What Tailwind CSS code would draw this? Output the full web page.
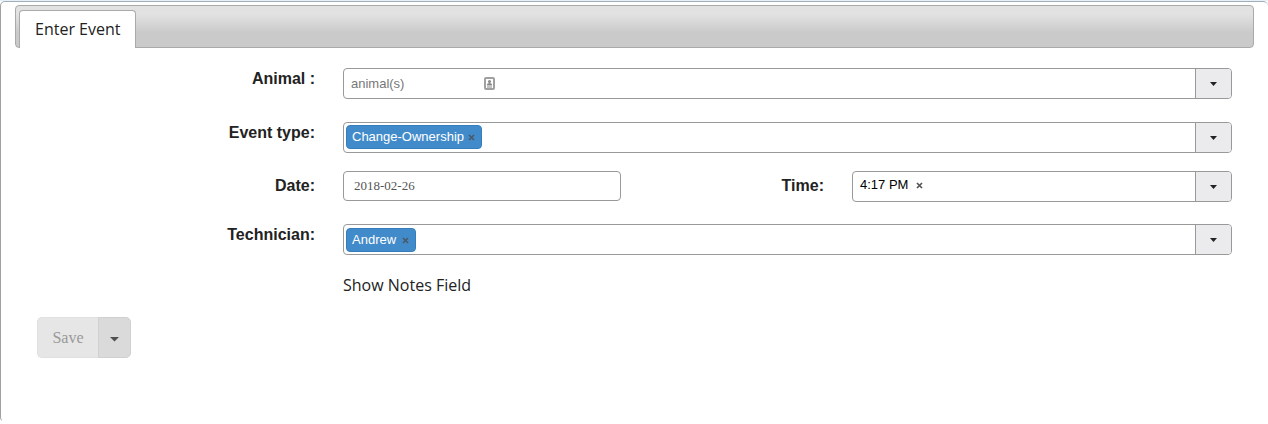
<!DOCTYPE html>
<html lang="en">
<head>
    <meta charset="UTF-8">
    <meta name="viewport" content="width=device-width, initial-scale=1.0">
    <title>Enter Event</title>
    <script src="https://cdn.jsdelivr.net/npm/@tailwindcss/browser@4"></script>
</head>
<body class="min-h-screen bg-white border-t border-[#e9f0f5] pb-0.5 flex flex-col font-['Liberation_Sans',sans-serif] text-[#222]">
    <main class="grow bg-white border border-r-0 border-t-[#9db0bc] border-l-[#a0a0a0] border-b-transparent rounded-[5px] px-3.5 pt-[3px]">
        <!-- Tabs -->
        <nav class="flex h-[43px] pl-[3px] pt-1 border border-[#aaa] rounded-[4px] bg-linear-to-b from-[#e2e2e2] from-20% to-[#cacaca] to-65%">
            <a href="#event" class="h-[38px] px-[15px] leading-9 text-base font-['Open_Sans',sans-serif] bg-white border border-b-0 border-[#aaa] rounded-t-[4px]">Enter Event</a>
        </nav>

        <form id="event" class="px-[22px] pt-5">
            <!-- Animal -->
            <div class="grid grid-cols-[278fr_889fr] gap-7 mb-[23px]">
                <label for="animal" class="text-right font-bold leading-[22px]">Animal :</label>
                <div class="flex h-[31px] border border-[#999] rounded-[4px] overflow-hidden">
                    <div class="flex items-center w-[152px] pl-[7px]">
                        <input type="text" id="animal" placeholder="animal(s)" class="w-[133px] text-[13px] leading-5 placeholder:text-[#777] outline-none">
                        <svg class="shrink-0" width="12" height="14" viewBox="0 0 12 14" fill="none">
                            <rect x="1" y="1" width="9" height="11" rx="1" stroke="#a0a0a0" stroke-width="2"/>
                            <circle cx="5.5" cy="4.5" r="1.5" fill="#888"/>
                            <path d="M3 8.500V7.500Q3 6 5.500 6T8 7.500V8.500ZM3 9.500H8V10.500H3Z" fill="#888"/>
                        </svg>
                    </div>
                    <button type="button" aria-label="Show animals" class="ml-auto w-9 flex items-center justify-center bg-[#ebebed] border-l border-[#999]">
                        <svg width="7" height="4" viewBox="0 0 7 4"><path d="M0 0H7L3.500 4Z" fill="#222"/></svg>
                    </button>
                </div>
            </div>

            <!-- Event type -->
            <div class="grid grid-cols-[278fr_889fr] gap-7 mb-[18px]">
                <label for="type" class="text-right font-bold leading-[22px]">Event type:</label>
                <div class="flex h-[31px] border border-[#999] rounded-[4px] overflow-hidden">
                    <div class="flex items-center gap-1 h-6 mt-0.5 ml-0.5 pl-[5px] pr-1.5 bg-[#428bca] border border-[#357ebd] rounded-[4px] text-[13px] text-white">
                        Change-Ownership
                        <button type="button" aria-label="Remove Change-Ownership">
                            <svg width="7" height="7" viewBox="0 0 7 7"><path d="M1 1L6 6M6 1L1 6" stroke="#4a5a66" stroke-width="1.7"/></svg>
                        </button>
                    </div>
                    <input type="text" id="type" class="grow min-w-0 px-1 text-[13px] outline-none">
                    <button type="button" aria-label="Show event types" class="w-9 flex items-center justify-center bg-[#ebebed] border-l border-[#999]">
                        <svg width="7" height="4" viewBox="0 0 7 4"><path d="M0 0H7L3.500 4Z" fill="#222"/></svg>
                    </button>
                </div>
            </div>

            <!-- Date and time -->
            <div class="grid grid-cols-[278fr_889fr] gap-7 mb-[22px]">
                <label for="date" class="text-right font-bold leading-[29px]">Date:</label>
                <div class="grid grid-cols-[278fr_175fr_380fr] gap-7">
                    <input type="text" id="date" value="2018-02-26" class="h-[30px] min-w-0 px-2.5 text-[13px] text-[#555] font-['Liberation_Serif',serif] border border-[#999] rounded-[4px] outline-none">
                    <label for="time" class="text-right font-bold leading-[29px]">Time:</label>
                    <div class="flex h-[31px] border border-[#999] rounded-[4px] overflow-hidden">
                        <div class="flex items-center gap-2 h-[26px] pl-[7px] text-[13px] text-black">
                            4:17 PM
                            <button type="button" aria-label="Clear time">
                                <svg width="7" height="7" viewBox="0 0 7 7"><path d="M1 1L6 6M6 1L1 6" stroke="#555" stroke-width="1.7"/></svg>
                            </button>
                        </div>
                        <input type="text" id="time" class="grow min-w-0 px-1 text-[13px] outline-none">
                        <button type="button" aria-label="Show times" class="w-9 flex items-center justify-center bg-[#ebebed] border-l border-[#999]">
                            <svg width="7" height="4" viewBox="0 0 7 4"><path d="M0 0H7L3.500 4Z" fill="#222"/></svg>
                        </button>
                    </div>
                </div>
            </div>

            <!-- Technician -->
            <div class="grid grid-cols-[278fr_889fr] gap-7 mb-[18px]">
                <label for="technician" class="text-right font-bold leading-[22px]">Technician:</label>
                <div class="flex h-[31px] border border-[#999] rounded-[4px] overflow-hidden">
                    <div class="flex items-center gap-1.5 h-6 mt-[3px] ml-0.5 pl-[5px] pr-1.5 bg-[#428bca] border border-[#357ebd] rounded-[4px] text-[13px] text-white">
                        Andrew
                        <button type="button" aria-label="Remove Andrew">
                            <svg width="7" height="7" viewBox="0 0 7 7"><path d="M1 1L6 6M6 1L1 6" stroke="#4a5a66" stroke-width="1.7"/></svg>
                        </button>
                    </div>
                    <input type="text" id="technician" class="grow min-w-0 px-1 text-[13px] outline-none">
                    <button type="button" aria-label="Show technicians" class="w-9 flex items-center justify-center bg-[#ebebed] border-l border-[#999]">
                        <svg width="7" height="4" viewBox="0 0 7 4"><path d="M0 0H7L3.500 4Z" fill="#222"/></svg>
                    </button>
                </div>
            </div>

            <div class="grid grid-cols-[278fr_889fr] gap-7 mb-5">
                <a href="#notes" class="col-start-2 justify-self-start leading-6 text-base font-['Open_Sans',sans-serif]">Show Notes Field</a>
            </div>

            <!-- Save -->
            <div class="flex">
                <button type="submit" disabled class="h-[41px] w-[61px] text-base text-[#999] font-['Liberation_Serif',serif] bg-[#e6e6e6] border border-r-0 border-[#e0e0e0] rounded-l-[5px]">Save</button>
                <button type="button" disabled aria-label="More save options" class="h-[41px] w-[33px] flex items-center justify-center pt-1 bg-[#dadada] border border-[#d0d0d0] rounded-r-[5px]">
                    <svg width="9" height="5" viewBox="0 0 9 5"><path d="M0 0H9L4.500 4.500Z" fill="#505050"/></svg>
                </button>
            </div>
        </form>
    </main>
</body>
</html>
